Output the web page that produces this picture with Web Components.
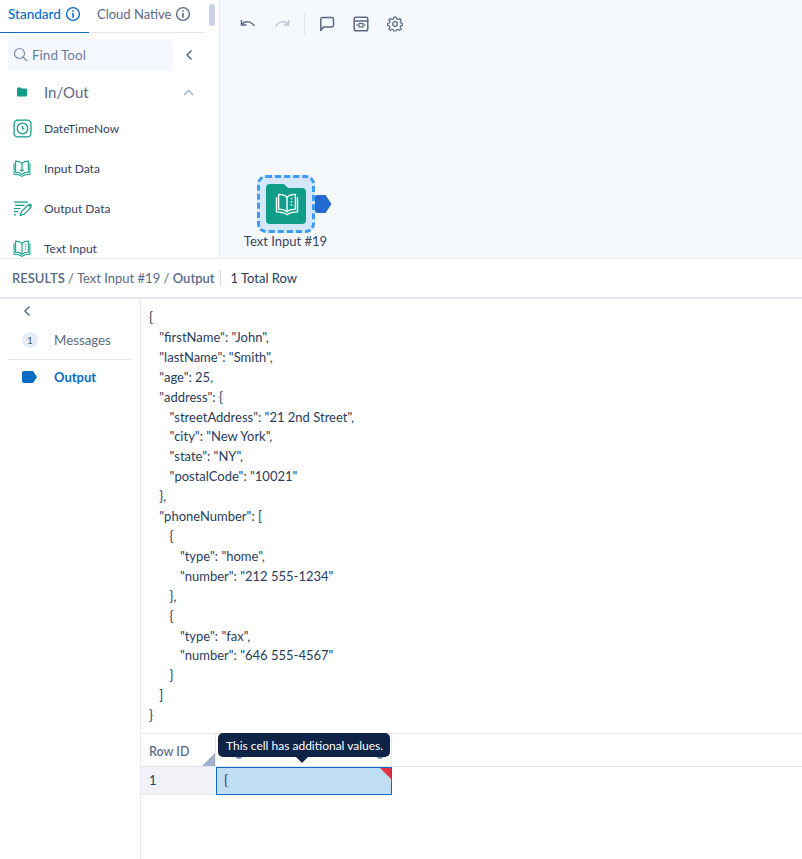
<!DOCTYPE html>
<html>
<head>
<meta charset="utf-8">
<title>Results</title>
<style>
  html, body { margin: 0; height: 100%; background: #fff; }
  body { font-family: Lato, sans-serif; color: #283d5b; overflow: hidden; }
</style>
</head>
<body>
<app-shell>
  <tool-palette slot="palette"></tool-palette>
  <workflow-canvas slot="canvas"></workflow-canvas>
  <results-bar slot="bar"></results-bar>
  <results-nav slot="nav"></results-nav>
  <results-view slot="view"></results-view>
</app-shell>
<script>
const ICONS = {
  info: '<circle cx="8" cy="8" r="6.4" fill="none" stroke="currentColor" stroke-width="1.4"/><rect x="7.2" y="7" width="1.6" height="4.6" fill="currentColor"/><rect x="7.2" y="4.3" width="1.6" height="1.6" fill="currentColor"/>',
  clock: '<rect x="1" y="1" width="16" height="16" rx="3.5" fill="none" stroke="currentColor" stroke-width="1.2"/><circle cx="9" cy="9" r="5" fill="none" stroke="currentColor" stroke-width="1.2"/><path d="M9 6.3V9.3H10.8" fill="none" stroke="currentColor" stroke-width="1.1"/>',
  book: '<path d="M2.500 2C5 2 7.200 2.700 8.500 4.200 9.800 2.700 12 2 14.500 2V12.500C12 12.500 9.800 13.200 8.500 14.500 7.200 13.200 5 12.500 2.500 12.500Z" fill="none" stroke="currentColor" stroke-width="1"/><path d="M8.500 4.200V11.500M6.800 10 8.500 11.700 10.200 10" fill="none" stroke="currentColor" stroke-width="1"/><path d="M1 4V14.500C4 14.500 6.500 15 8.500 16.500 10.500 15 13 14.500 16 14.500V4" fill="none" stroke="currentColor" stroke-width="1"/>',
  bookText: '<path d="M2.500 2C5 2 7.200 2.700 8.500 4.200 9.800 2.700 12 2 14.500 2V12.500C12 12.500 9.800 13.200 8.500 14.500 7.200 13.200 5 12.500 2.500 12.500Z" fill="none" stroke="currentColor" stroke-width="1"/><path d="M8.500 4.200V14" fill="none" stroke="currentColor" stroke-width="1"/><path d="M11.700 4.500V5.500M11.700 6.800V7.800M11.700 9.100V10.100" stroke="currentColor" stroke-width="1.100"/><path d="M1 4V14.500C4 14.500 6.500 15 8.500 16.500 10.500 15 13 14.500 16 14.500V4" fill="none" stroke="currentColor" stroke-width="1"/>',
  output: '<path d="M1 3H14M2 6H11M1 9H7M1 12H5M1 15H3" stroke="currentColor" stroke-width="1.100" fill="none"/><path d="M7 15.500 8 12 14.500 5.500 17 8 10.500 14.500Z" fill="none" stroke="currentColor" stroke-width="1.100"/><path d="M15 5 16 4 18 6 17 7.500Z" fill="currentColor"/>'
};

function icon(name, size, box) {
  return `<svg width="${size}" height="${size}" viewBox="0 0 ${box} ${box}" aria-hidden="true">${ICONS[name]}</svg>`;
}

class AppShell extends HTMLElement {
  constructor() {
    super();
    this.attachShadow({ mode: 'open' });
    this.shadowRoot.innerHTML = `
      <style>
        :host { display: grid; width: 802px; height: 859px; grid-template-rows: 259px 40px 1fr; }
        .top { display: grid; grid-template-columns: 220px 1fr; border-bottom: 1px solid #e6e9f2; min-height: 0; }
        .bottom { display: grid; grid-template-columns: 141px 1fr; min-height: 0; }
      </style>
      <div class="top"><slot name="palette"></slot><slot name="canvas"></slot></div>
      <slot name="bar"></slot>
      <div class="bottom"><slot name="nav"></slot><slot name="view"></slot></div>
    `;
  }
}

class ToolPalette extends HTMLElement {
  constructor() {
    super();
    this.attachShadow({ mode: 'open' });
    const tools = [
      ['DateTimeNow', 'clock'],
      ['Input Data', 'book'],
      ['Output Data', 'output'],
      ['Text Input', 'bookText']
    ];
    this.shadowRoot.innerHTML = `
      <style>
        :host { display: block; position: relative; box-sizing: border-box; height: 258px; overflow: hidden; background: #fff; border-right: 1px solid #e6e9f2; }
        .tabs { display: flex; width: 205px; height: 32px; border-bottom: 1px solid #e2e6f1; font-size: 13px; }
        .tab { display: flex; align-items: center; gap: 4px; box-sizing: border-box; height: 32px; padding-bottom: 5px; color: #5a6a85; white-space: nowrap; }
        .tab.on { width: 89px; padding-left: 8px; border-bottom: 1px solid #0b6bc5; height: 33px; color: #0b6bc5; font-weight: 500; font-size: 13.500px; }
        .tab.off { padding-left: 8px; }
        .tab svg { flex: none; margin-top: 1px; }
        .thumb { position: absolute; left: 209px; top: 4px; width: 6px; height: 22px; border-radius: 3px; background: #c9d2e6; }
        .search { display: flex; align-items: center; margin: 6px 0 0 8px; width: 190px; }
        .find { display: flex; align-items: center; gap: 4px; width: 165px; height: 32px; padding: 0 0 1px 5px; box-sizing: border-box; background: #f4f7fd; border-radius: 4px; font-size: 13.500px; color: #6e7f9b; }
        .back { margin-left: 12px; }
        .group { display: flex; align-items: center; height: 20px; margin-top: 11px; font-size: 15px; color: #5a6a85; }
        .group .fold { margin-left: 17px; }
        .group .name { margin-left: 17px; }
        .group .up { margin-left: auto; margin-right: 25px; }
        .tool { display: flex; align-items: center; height: 20px; margin-top: 20px; padding-left: 13px; font-size: 12px; color: #31425f; }
        .group + .tool { margin-top: 16px; }
        .tool .ic { width: 19px; height: 19px; color: #0f9d8a; }
        .tool .lb { margin-left: 12px; }
      </style>
      <div class="tabs">
        <div class="tab on">Standard ${icon('info', 16, 16)}</div>
        <div class="tab off">Cloud Native ${icon('info', 16, 16)}</div>
      </div>
      <div class="thumb"></div>
      <div class="search">
        <div class="find">
          <svg width="15" height="15" viewBox="0 0 15 15"><circle cx="6.500" cy="6.500" r="5" fill="none" stroke="#7f90ad" stroke-width="1.200"/><path d="M10.200 10.200 14 14" stroke="#7f90ad" stroke-width="1.200"/></svg>
          Find Tool
        </div>
        <svg class="back" width="8" height="12" viewBox="0 0 8 12"><path d="M6.500 1.500 2 6l4.500 4.500" fill="none" stroke="#5a6a85" stroke-width="1.500"/></svg>
      </div>
      <div class="group">
        <svg class="fold" width="10" height="10" viewBox="0 0 10 10"><path d="M0 1.500Q0 .5 1 .5H4L5 1.500H9Q10 1.500 10 2.500V8.500Q10 9.500 9 9.500H1Q0 9.500 0 8.500Z" fill="#0f9d8a"/></svg>
        <span class="name">In/Out</span>
        <svg class="up" width="11" height="7" viewBox="0 0 11 7"><path d="M1 6 5.500 1.500 10 6" fill="none" stroke="#9aa8c0" stroke-width="1.300"/></svg>
      </div>
      ${tools.map(([label, name]) => `<div class="tool"><span class="ic">${icon(name, 19, 18)}</span><span class="lb">${label}</span></div>`).join('')}
    `;
  }
}

class WorkflowCanvas extends HTMLElement {
  constructor() {
    super();
    this.attachShadow({ mode: 'open' });
    this.shadowRoot.innerHTML = `
      <style>
        :host { display: block; position: relative; height: 258px; background: #f5f8fd; overflow: hidden; }
        .bar { display: flex; align-items: center; gap: 18px; padding: 12px 0 0 20px; height: 24px; color: #5a6a85; }
        .bar svg { display: block; flex: none; }
        .sep { width: 1px; height: 24px; background: #e1e5ee; margin: 0 -5px 0 -4px; }
        .node { position: absolute; left: 37px; top: 175px; width: 58px; height: 58px; box-sizing: border-box; border: 3px dashed #3d9bf5; border-radius: 9px; background: #d5e7fa; display: flex; align-items: center; justify-content: center; }
        .tile { width: 40px; height: 40px; }
        .anchor { position: absolute; left: 95px; top: 195px; }
        .name { position: absolute; left: 0; top: 233px; width: 131px; text-align: center; font-size: 13px; color: #3a475c; white-space: nowrap; }
      </style>
      <div class="bar">
        <svg width="16" height="12" viewBox="0 0 16 12"><path d="M1.500 2V7H6.500" fill="none" stroke="currentColor" stroke-width="1.500"/><path d="M2 6.500C4.500 3 10.500 2.500 14.500 8" fill="none" stroke="currentColor" stroke-width="1.500"/></svg>
        <svg width="16" height="12" viewBox="0 0 16 12"><path d="M14.500 2V7H9.500" fill="none" stroke="#bcc5d6" stroke-width="1.500"/><path d="M14 6.500C11.500 3 5.500 2.500 1.500 8" fill="none" stroke="#bcc5d6" stroke-width="1.500"/></svg>
        <div class="sep"></div>
        <svg width="16" height="16" viewBox="0 0 16 16" style="margin-left:1px"><path d="M1.800 14.500V3.200Q1.800 1.500 3.500 1.500H12.800Q14.500 1.500 14.500 3.200V9.300Q14.500 11 12.800 11H4.500L1.800 14.500Z" fill="none" stroke="currentColor" stroke-width="1.500" stroke-linejoin="round"/></svg>
        <svg width="16" height="16" viewBox="0 0 16 16"><rect x="1.200" y="1.200" width="13.600" height="13.600" rx="1.800" fill="none" stroke="currentColor" stroke-width="1.500"/><path d="M1.500 5H14.500" stroke="currentColor" stroke-width="1.500"/><rect x="6" y="7.500" width="4" height="3.500" fill="none" stroke="currentColor" stroke-width="1.200"/><path d="M3.500 9.200H5M11 9.200H12.500" stroke="currentColor" stroke-width="1.200"/></svg>
        <svg width="16" height="16" viewBox="0 0 16 16"><circle cx="8" cy="8" r="2.300" fill="none" stroke="currentColor" stroke-width="1.300"/><path d="M6.800 1H9.200L9.600 3 11.200 3.700 13 2.600 14.700 4.300 13.500 6 14.200 7.400 16 7.800V10L14.200 10.400 13.500 12 14.700 13.700 13 15.300 11.200 14.200 9.600 14.900 9.200 16H6.800L6.400 14.900 4.800 14.200 3 15.300 1.300 13.700 2.500 12 1.800 10.400 0 10V7.800L1.800 7.400 2.500 6 1.300 4.300 3 2.600 4.800 3.700 6.400 3Z" transform="translate(.6 .1) scale(.93)" fill="none" stroke="currentColor" stroke-width="1.300" stroke-linejoin="round"/></svg>
      </div>
      <div class="node">
        <svg class="tile" viewBox="0 0 40 40">
          <path d="M0 4Q0 0 4 0H18L22 4H36Q40 4 40 8V36Q40 40 36 40H4Q0 40 0 36Z" fill="#0f9d8a"/>
          <g transform="translate(9.100 7.600) scale(1.400)" color="#fff">${ICONS.bookText}</g>
        </svg>
      </div>
      <svg class="anchor" width="17" height="18" viewBox="0 0 17 18"><path d="M0 2Q0 0 2 0H10.500L16.500 9 10.500 18H2Q0 18 0 16Z" fill="#2469d1"/></svg>
      <div class="name">Text Input #19</div>
    `;
  }
}

class ResultsBar extends HTMLElement {
  constructor() {
    super();
    this.attachShadow({ mode: 'open' });
    this.shadowRoot.innerHTML = `
      <style>
        :host { display: flex; align-items: center; box-sizing: border-box; height: 40px; padding: 0 0 0 12px; border-bottom: 2px solid #e6e9f2; font-size: 13px; color: #5a6a85; white-space: nowrap; }
        b { font-weight: 600; }
        .sep { width: 1px; height: 16px; background: #d5dae5; margin: 0 10px 0 5px; }
        .count { color: #283d5b; }
      </style>
      <span><b>RESULTS</b> / Text Input #19 / <b>Output</b></span>
      <span class="sep"></span>
      <span class="count">1 Total Row</span>
    `;
  }
}

class ResultsNav extends HTMLElement {
  constructor() {
    super();
    this.attachShadow({ mode: 'open' });
    this.shadowRoot.innerHTML = `
      <style>
        :host { display: block; box-sizing: border-box; border-right: 1px solid #e6e9f2; font-size: 13.300px; }
        .collapse { display: block; margin: 6px 0 0 23px; }
        .item { display: flex; align-items: center; height: 20px; margin-left: 8px; width: 124px; }
        .msg { margin-top: 13px; padding-bottom: 9px; border-bottom: 1px solid #e6e9f2; color: #5a6a85; }
        .out { margin-top: 7px; color: #0b6bc5; font-weight: 700; font-size: 13px; }
        .badge { width: 16px; height: 16px; margin-left: 14px; border-radius: 50%; background: #e8ecf6; font-size: 10px; text-align: center; line-height: 16px; color: #4a5a78; }
        .lb { margin-left: 16px; }
        .out .lb { margin-left: 17px; }
        .shape { margin-left: 14px; display: block; }
      </style>
      <svg class="collapse" width="8" height="12" viewBox="0 0 8 12"><path d="M6.500 1.500 2 6l4.500 4.500" fill="none" stroke="#5a6a85" stroke-width="1.500"/></svg>
      <div class="item msg"><span class="badge">1</span><span class="lb">Messages</span></div>
      <div class="item out">
        <svg class="shape" width="15" height="12" viewBox="0 0 15 12"><path d="M0 2Q0 0 2 0H11L15 6 11 12H2Q0 12 0 10Z" fill="#0b6bc5"/></svg>
        <span class="lb">Output</span>
      </div>
    `;
  }
}

class ResultsView extends HTMLElement {
  constructor() {
    super();
    this.attachShadow({ mode: 'open' });
    const json = [
      [0, '{'],
      [1, '"firstName": "John",'],
      [1, '"lastName": "Smith",'],
      [1, '"age": 25,'],
      [1, '"address": {'],
      [2, '"streetAddress": "21 2nd Street",'],
      [2, '"city": "New York",'],
      [2, '"state": "NY",'],
      [2, '"postalCode": "10021"'],
      [1, '},'],
      [1, '"phoneNumber": ['],
      [2, '{'],
      [3, '"type": "home",'],
      [3, '"number": "212 555-1234"'],
      [2, '},'],
      [2, '{'],
      [3, '"type": "fax",'],
      [3, '"number": "646 555-4567"'],
      [2, '}'],
      [1, ']'],
      [0, '}']
    ];
    this.shadowRoot.innerHTML = `
      <style>
        :host { display: block; position: relative; font-size: 13px; color: #283d5b; }
        .json { height: 435px; padding: 9px 0 0 8px; box-sizing: border-box; line-height: 19.900px; border-bottom: 1px solid #e6e9f2; }
        .json div { white-space: pre; }
        .grid { display: grid; grid-template-columns: 75px 176px 1fr; grid-template-rows: 33px 28px; }
        .head { display: flex; align-items: center; padding: 2px 0 0 8px; position: relative; color: #5f6f8b; font-size: 12.500px; font-weight: 600; border-right: 1px solid #e6e9f2; border-bottom: 1px solid #dfe3ec; }
        .head .corner { position: absolute; right: 0; bottom: 0; width: 0; height: 0; border-left: 13px solid transparent; border-bottom: 13px solid #9fb0cc; }
        .head2 { position: relative; border-bottom: 1px solid #dfe3ec; border-right: 1px solid #e6e9f2; }
        .dot { position: absolute; top: 20px; width: 6px; height: 5px; border-radius: 50%; background: #7f8ea8; }
        .head3 { border-bottom: 1px solid #dfe3ec; }
        .rowid { display: flex; align-items: center; padding: 0 0 2px 8px; background: #f0f2f8; border-bottom: 1px solid #e0e3ec; }
        .cell { position: relative; display: flex; align-items: center; padding: 0 0 2px 7px; box-sizing: border-box; background: #bfddf3; border: 1px solid #0b6bc5; }
        .cell::after { content: ""; position: absolute; right: 0; top: 0; border-top: 11px solid #e0324b; border-left: 11px solid transparent; }
        .tip { position: absolute; left: 77px; top: 434px; height: 24px; padding: 0 7px 0 8px; display: flex; align-items: center; background: #0e2345; color: #fff; border-radius: 5px; font-size: 12px; white-space: nowrap; }
        .tip::after { content: ""; position: absolute; left: 78px; top: 24px; border: 6px solid transparent; border-top-color: #0e2345; border-bottom: 0; }
      </style>
      <div class="json">${json.map(([level, line]) => `<div style="margin-left:${level * 10.3}px">${line}</div>`).join('')}</div>
      <div class="grid">
        <div class="head">Row ID<span class="corner"></span></div>
        <div class="head2"><span class="dot" style="left:20px"></span><span class="dot" style="left:161px"></span></div>
        <div class="head3"></div>
        <div class="rowid">1</div>
        <div class="cell">{</div>
      </div>
      <div class="tip">This cell has additional values.</div>
    `;
  }
}

customElements.define('app-shell', AppShell);
customElements.define('tool-palette', ToolPalette);
customElements.define('workflow-canvas', WorkflowCanvas);
customElements.define('results-bar', ResultsBar);
customElements.define('results-nav', ResultsNav);
customElements.define('results-view', ResultsView);
</script>
</body>
</html>
